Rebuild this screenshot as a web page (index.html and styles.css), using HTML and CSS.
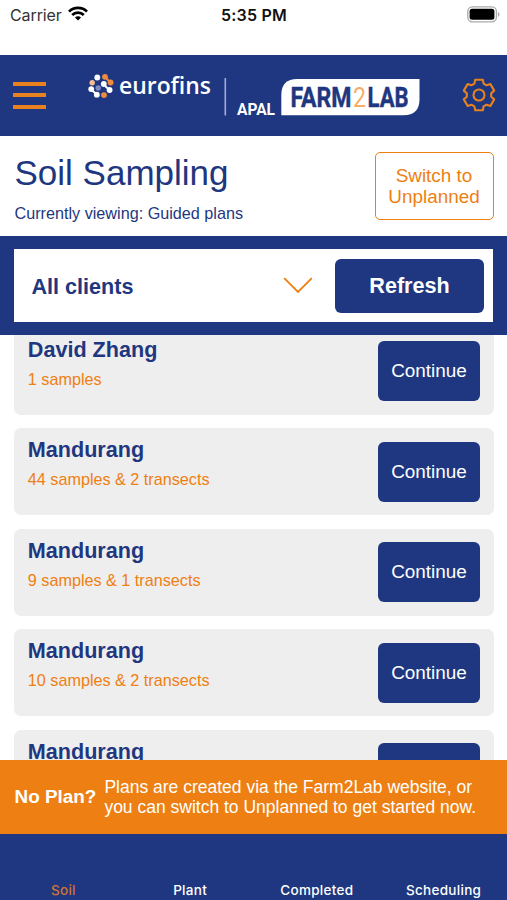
FILE: index.html
```
<!DOCTYPE html>
<html lang="en">
<head>
    <meta charset="UTF-8">
    <meta name="viewport" content="width=device-width, initial-scale=1.0">
    <title>Soil Sampling</title>
    <link rel="stylesheet" href="styles.css">
</head>
<body>
    <div class="status">
        <div class="carrier">
            Carrier
            <svg width="20" height="15" viewBox="0 0 20 15" fill="none" stroke="#000" stroke-width="2.7">
                <path d="M1 5.6a12.8 12.8 0 0 1 18 0"/>
                <path d="M4.2 9a8.2 8.2 0 0 1 11.6 0"/>
                <path d="M10 14.6l-3-3a4.2 4.2 0 0 1 6 0z" fill="#000" stroke="none"/>
            </svg>
        </div>
        <div class="time">5:35 PM</div>
        <svg class="battery" width="33" height="17" viewBox="0 0 33 17">
            <rect x="0.8" y="0.8" width="28.6" height="15" rx="4.5" fill="#fff" stroke="#a9a9a9" stroke-width="1.3"/>
            <rect x="2.6" y="2.8" width="24.8" height="11" rx="2.5"/>
            <path d="M31 6c2 .8 2 4 0 4.8z" fill="#a9a9a9"/>
        </svg>
    </div>

    <header class="header">
        <div class="burger">
            <span></span>
            <span></span>
            <span></span>
        </div>
        <svg class="logo" width="334" height="50" viewBox="0 0 334 50">
            <g stroke="#fff" stroke-width="2">
                <path d="M15 14l6.5 6M3 19.500l6 5"/>
                <path d="M17 6.500l5 6" stroke="#f08a3c"/>
            </g>
            <g fill="#fff">
                <circle cx="9.3" cy="7.5" r="2.9"/>
                <circle cx="15.8" cy="14" r="2.9"/>
                <circle cx="3.2" cy="19.1" r="2.9"/>
                <circle cx="21.6" cy="20" r="2.9"/>
                <circle cx="8.8" cy="24.7" r="2.9"/>
            </g>
            <g fill="#f08a3c">
                <circle cx="17" cy="6.8" r="2.9"/>
                <circle cx="22.6" cy="12.5" r="2.9"/>
                <circle cx="16" cy="25.1" r="2.9"/>
            </g>
            <circle cx="4.2" cy="12.8" r="2.7" fill="#f9bc92"/>
            <circle cx="10.2" cy="18" r="2.7" fill="#8088c4"/>
            <text class="eurofins" x="31" y="24" textLength="92" lengthAdjust="spacingAndGlyphs">eurofins</text>
            <path d="M137.3 8v37.5" stroke="#a3afd2" stroke-width="1.6"/>
            <text class="apal" x="149" y="45.3" textLength="38" lengthAdjust="spacingAndGlyphs">APAL</text>
            <path d="M193.3 45.3V25q0-16 16-16H331.5V29.3q0 16-16 16z" fill="#fff"/>
            <text class="farm" x="202.5" y="37.3" textLength="61" lengthAdjust="spacingAndGlyphs">FARM</text>
            <text class="two" x="265" y="37.3" textLength="13" lengthAdjust="spacingAndGlyphs">2</text>
            <text class="farm" x="279.5" y="37.3" textLength="41" lengthAdjust="spacingAndGlyphs">LAB</text>
        </svg>
        <svg class="gear" width="34" height="34" viewBox="-17 -17 34 34" fill="none" stroke="#e8821e" stroke-width="2.1" stroke-linejoin="round">
            <path d="M-3.8-15.3H3.8L4.6-11.4 7.6-9.7 11.4-10.9 15.2-4.4 12.2-1.7V1.7L15.2 4.4 11.4 10.9 7.6 9.7 4.6 11.4 3.8 15.3H-3.8L-4.6 11.4-7.6 9.7-11.4 10.9-15.2 4.4-12.2 1.7V-1.7L-15.2-4.4-11.4-10.9-7.6-9.7-4.6-11.4z"/>
            <circle r="5.5"/>
        </svg>
    </header>

    <div class="title-row">
        <div>
            <h1>Soil Sampling</h1>
            <p class="viewing">Currently viewing: Guided plans</p>
        </div>
        <button class="switch">Switch to<br>Unplanned</button>
    </div>

    <div class="filter">
        <div class="filter-box">
            <span class="client">All clients</span>
            <svg width="30" height="17" viewBox="0 0 30 17" fill="none" stroke="#ee7f12" stroke-width="1.8">
                <path d="M1.2 1.2L15 15 28.8 1.2"/>
            </svg>
            <button class="btn refresh">Refresh</button>
        </div>
    </div>

    <div class="plans">
        <div class="card">
            <div>
                <h2>David Zhang</h2>
                <p>1 samples</p>
            </div>
            <button class="btn">Continue</button>
        </div>
        <div class="card">
            <div>
                <h2>Mandurang</h2>
                <p>44 samples &amp; 2 transects</p>
            </div>
            <button class="btn">Continue</button>
        </div>
        <div class="card">
            <div>
                <h2>Mandurang</h2>
                <p>9 samples &amp; 1 transects</p>
            </div>
            <button class="btn">Continue</button>
        </div>
        <div class="card">
            <div>
                <h2>Mandurang</h2>
                <p>10 samples &amp; 2 transects</p>
            </div>
            <button class="btn">Continue</button>
        </div>
        <div class="card">
            <div>
                <h2>Mandurang</h2>
            </div>
            <button class="btn"></button>
        </div>
    </div>

    <div class="notice">
        <b>No Plan?</b>
        <p>Plans are created via the Farm2Lab website, or<br>you can switch to Unplanned to get started now.</p>
    </div>

    <nav class="tabs">
        <a class="active">Soil</a>
        <a>Plant</a>
        <a>Completed</a>
        <a>Scheduling</a>
    </nav>
</body>
</html>
```
FILE: styles.css
```
* {
    box-sizing: border-box;
}

body {
    margin: 0;
    height: 900px;
    display: flex;
    flex-direction: column;
    overflow: hidden;
    background-color: #fff;
    color: #1e3780;
    font-family: "Liberation Sans", Arial, sans-serif;
}

h1, h2, p {
    margin: 0;
}

button {
    font-family: inherit;
    padding: 0;
}

.status {
    height: 55px;
    flex: none;
    display: grid;
    grid-template-columns: 1fr auto 1fr;
    align-items: start;
    padding: 5px 7px 0 10px;
    color: #111;
    font: 16px/20px Inter, sans-serif;
}

.carrier {
    display: flex;
    gap: 6px;
    color: #333;
    letter-spacing: -0.1px;
}

.carrier svg {
    margin-top: 1px;
}

.time {
    font-weight: 600;
    letter-spacing: 0.2px;
    margin-right: 2px;
}

.battery {
    justify-self: end;
    margin-top: 0.5px;
}

.header {
    height: 80.5px;
    flex: none;
    display: flex;
    align-items: center;
    background-color: #1e3780;
    padding: 0 11.5px 0 13px;
}

.burger {
    width: 33px;
    display: flex;
    flex-direction: column;
    gap: 7.5px;
}

.burger span {
    height: 4px;
    background-color: #e8821e;
}

.logo {
    margin-left: 42px;
}

.gear {
    margin-left: auto;
}

.eurofins {
    font: 600 23px "Open Sans", sans-serif;
    fill: #fff;
}

.apal {
    font: 700 16.5px Roboto, sans-serif;
    fill: #fff;
}

.farm {
    font: 700 27px Roboto, sans-serif;
    fill: #1e3780;
    stroke: #1e3780;
    stroke-width: 0.4px;
}

.two {
    font: 400 28px Roboto, sans-serif;
    fill: #f6ad6a;
}

.title-row {
    height: 100.5px;
    flex: none;
    display: flex;
    justify-content: space-between;
    padding: 16px 13.5px 0 14.5px;
}

h1 {
    font-size: 35px;
    font-weight: normal;
    line-height: 42px;
}

.viewing {
    font-size: 16.2px;
    line-height: 20px;
    margin-top: 9px;
}

.switch {
    width: 119px;
    height: 68px;
    border: 1.5px solid #ee7f12;
    border-radius: 5px;
    background-color: #fff;
    color: #ee7f12;
    font-size: 18.9px;
    line-height: 21px;
}

.filter {
    height: 99px;
    flex: none;
    background-color: #1e3780;
    padding: 13px 14px;
}

.filter-box {
    height: 73px;
    display: flex;
    align-items: center;
    background-color: #fff;
    padding: 0 9px 0 17.5px;
}

.client {
    font-size: 21.6px;
    font-weight: bold;
    flex: 1;
    padding-top: 2px;
}

.btn {
    width: 102px;
    height: 60px;
    border: none;
    border-radius: 6px;
    background-color: #1e3780;
    color: #fff;
    font-size: 18.9px;
}

.refresh {
    width: 149px;
    height: 54px;
    font-size: 21.6px;
    font-weight: bold;
    margin-left: 22.5px;
}

/* the list is scrolled a little under the filter bar */
.plans {
    flex: 1;
    min-height: 0;
    display: flex;
    flex-direction: column;
    gap: 13.5px;
    padding: 0 13.5px 0 14.3px;
    overflow: hidden;
}

.card {
    height: 87px;
    flex: none;
    display: flex;
    justify-content: space-between;
    padding: 13.5px 13.5px 0 13.5px;
    border-radius: 7px;
    background-color: #eee;
}

.card:first-child {
    margin-top: -7.4px;
}

h2 {
    font-size: 21.6px;
    line-height: 24px;
    margin-top: -3.4px;
}

.card p {
    color: #ee7f12;
    font-size: 16.2px;
    line-height: 20px;
    margin-top: 7px;
}

.notice {
    height: 74px;
    flex: none;
    display: flex;
    align-items: center;
    gap: 8px;
    padding-left: 14.5px;
    background-color: #ee7f12;
    color: #fff;
    font-size: 17.5px;
    line-height: 20px;
}

.notice b {
    font-size: 18.9px;
}

.tabs {
    height: 66.5px;
    flex: none;
    display: flex;
    align-items: flex-end;
    background-color: #1e3780;
    padding-bottom: 2px;
}

.tabs a {
    flex: 1;
    text-align: center;
    color: #fff;
    font: 500 13.5px/16px Inter, sans-serif;
    letter-spacing: 0.3px;
}

.tabs .active {
    color: #cf7530;
}
```
